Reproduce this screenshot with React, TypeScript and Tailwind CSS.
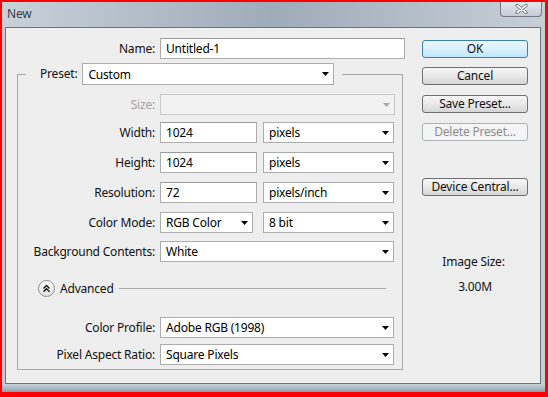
import React from "react";

const font = { fontFamily: '"Segoe UI", "Noto Sans", "Open Sans", sans-serif' };

function Arrow({ disabled }: { disabled?: boolean }) {
  return (
    <svg width="7" height="4" viewBox="0 0 7 4" className="shrink-0">
      <path d="M0 0 H7 L3.5 4 Z" fill={disabled ? "#a8a8a8" : "#000"} />
    </svg>
  );
}

function Select({ cls, value, disabled }: { cls: string; value?: string; disabled?: boolean }) {
  return (
    <div
      className={`${cls} h-[21px] flex items-center justify-between pl-[5px] pr-[4px] border ${
        disabled ? "border-[#c9c9c9] bg-[#f2f2f2]" : "border-[#acacac] bg-white"
      }`}
    >
      <span className="leading-none whitespace-nowrap pt-[1px]">{value}</span>
      <Arrow disabled={disabled} />
    </div>
  );
}

function Input({ cls, value }: { cls: string; value: string }) {
  return (
    <div className={`${cls} h-[21px] flex items-center pl-[5px] border border-[#acacac] border-t-[#9a9a9a] bg-white`}>
      <span className="leading-none pt-[1px]">{value}</span>
    </div>
  );
}

function Label({ text, disabled }: { text: string; disabled?: boolean }) {
  return (
    <div className={`w-[137px] shrink-0 text-right whitespace-nowrap ${disabled ? "text-[#a3a3a3]" : "text-[#111]"}`}>
      {text}
    </div>
  );
}

function Btn({ text, cls, primary, disabled }: { text: string; cls: string; primary?: boolean; disabled?: boolean }) {
  let style = "border-[#707070] bg-gradient-to-b from-[#f6f6f6] via-[#e9e9e9] to-[#d6d6d6] text-[#111]";
  if (primary) style = "border-[#3c7fb1] bg-gradient-to-b from-[#eaf6fd] via-[#d9f0fc] to-[#bee6fd] text-[#111]";
  if (disabled) style = "border-[#adb2b5] bg-[#f4f4f4] text-[#8d8d8d]";
  return (
    <div className={`${cls} w-[106px] h-[18px] rounded-[3px] border flex items-center justify-center leading-none ${style}`}>
      {text}
    </div>
  );
}

export default function App() {
  return (
    <div
      className="w-[548px] h-[397px] border-t-2 border-l-2 border-r-[3px] border-b-[5px] border-[#ff0000] flex flex-col text-[12px] tracking-[-0.2px] overflow-hidden"
      style={font}
    >
      {/* title bar */}
      <div className="h-[25px] shrink-0 flex items-start justify-between bg-gradient-to-r from-[#c9d1d9] via-[#9eabb9] to-[#c8cfd7]">
        <div className="pl-[5px] pt-[3px] text-[12px] text-[#3b3f44]">New</div>
        <div className="mr-[3px] w-[42px] h-[15px] rounded-b-[4px] border border-t-0 border-[#707a86] bg-gradient-to-b from-[#e4e8ec] to-[#c5ccd4] flex items-center justify-center">
          <svg width="13" height="10" viewBox="0 0 13 10">
            <path d="M2 1.5 L11 8.5 M11 1.5 L2 8.5" stroke="#5a6470" strokeWidth="3.2" strokeLinecap="round" />
            <path d="M2 1.5 L11 8.5 M11 1.5 L2 8.5" stroke="#ffffff" strokeWidth="1.6" strokeLinecap="round" />
          </svg>
        </div>
      </div>

      {/* middle */}
      <div className="flex-1 flex min-h-0">
        <div className="w-[3px] bg-[#c3ccd5]" />
        <div className="flex-1 border border-[#6e747c] bg-[#eeeeee] flex">
          {/* left column */}
          <div className="w-[399px] pl-[11px] pt-[10px] shrink-0">
            <div className="flex items-center h-[21px]">
              <div className="w-[138px] text-right text-[#111]">Name:</div>
              <Input cls="ml-[5px] w-[245px]" value="Untitled-1" />
            </div>
            <fieldset className="mt-[4px] w-[386px] border border-[#a9a9a9] pb-[4px]">
              <legend className="ml-[8px] pl-[14px] pr-[8px]">
                <div className="flex items-center h-[22px]">
                  <span className="text-[#111]">Preset:</span>
                  <Select cls="ml-[5px] w-[252px] h-[22px]" value="Custom" />
                </div>
              </legend>
              <div className="mt-[9px] flex items-center h-[21px]">
                <Label text="Size:" disabled />
                <Select cls="ml-[5px] w-[235px]" disabled />
              </div>
              <div className="mt-[7px] flex items-center h-[21px]">
                <Label text="Width:" />
                <Input cls="ml-[5px] w-[97px]" value="1024" />
                <Select cls="ml-[6px] w-[131px]" value="pixels" />
              </div>
              <div className="mt-[9px] flex items-center h-[21px]">
                <Label text="Height:" />
                <Input cls="ml-[5px] w-[97px]" value="1024" />
                <Select cls="ml-[6px] w-[131px]" value="pixels" />
              </div>
              <div className="mt-[9px] flex items-center h-[21px]">
                <Label text="Resolution:" />
                <Input cls="ml-[5px] w-[97px]" value="72" />
                <Select cls="ml-[6px] w-[131px]" value="pixels/inch" />
              </div>
              <div className="mt-[9px] flex items-center h-[21px]">
                <Label text="Color Mode:" />
                <Select cls="ml-[5px] w-[93px]" value="RGB Color" />
                <Select cls="ml-[10px] w-[131px]" value="8 bit" />
              </div>
              <div className="mt-[8px] flex items-center h-[21px]">
                <Label text="Background Contents:" />
                <Select cls="ml-[5px] w-[234px]" value="White" />
              </div>
              <div className="mt-[18px] flex items-center h-[17px]">
                <div className="ml-[20px] w-[17px] h-[17px] rounded-full border border-[#8c8c8c] bg-gradient-to-b from-[#ffffff] to-[#e2e2e2] flex items-center justify-center">
                  <svg width="9" height="9" viewBox="0 0 9 9">
                    <path d="M1.5 4.5 L4.5 1.5 L7.5 4.5 M1.5 7.8 L4.5 4.8 L7.5 7.8" stroke="#111" strokeWidth="1.4" fill="none" />
                  </svg>
                </div>
                <span className="ml-[5px] text-[#111]">Advanced</span>
                <div className="flex-1 ml-[5px] mr-[16px] h-px bg-[#a9a9a9]" />
              </div>
              <div className="mt-[20px] flex items-center h-[21px]">
                <Label text="Color Profile:" />
                <Select cls="ml-[5px] w-[234px]" value="Adobe RGB (1998)" />
              </div>
              <div className="mt-[6px] flex items-center h-[21px]">
                <Label text="Pixel Aspect Ratio:" />
                <Select cls="ml-[5px] w-[234px]" value="Square Pixels" />
              </div>
            </fieldset>
          </div>

          {/* right column */}
          <div className="ml-[17px] pt-[12px] w-[106px] flex flex-col items-center">
            <Btn cls="" text="OK" primary />
            <Btn cls="mt-[9px]" text="Cancel" />
            <Btn cls="mt-[10px]" text="Save Preset..." />
            <Btn cls="mt-[10px]" text="Delete Preset..." disabled />
            <Btn cls="mt-[37px]" text="Device Central..." />
            <div className="mt-[58px] text-[#111] leading-[16px] pr-[3px]">Image Size:</div>
            <div className="mt-[9px] text-[#111] leading-[16px]">3.00M</div>
          </div>
        </div>
        <div className="w-[4px] bg-[#c6ced7]" />
      </div>

      {/* bottom frame */}
      <div className="h-[8px] shrink-0 bg-gradient-to-b from-[#c9d2da] via-[#aebbc8] to-[#8f9caa]" />
    </div>
  );
}
